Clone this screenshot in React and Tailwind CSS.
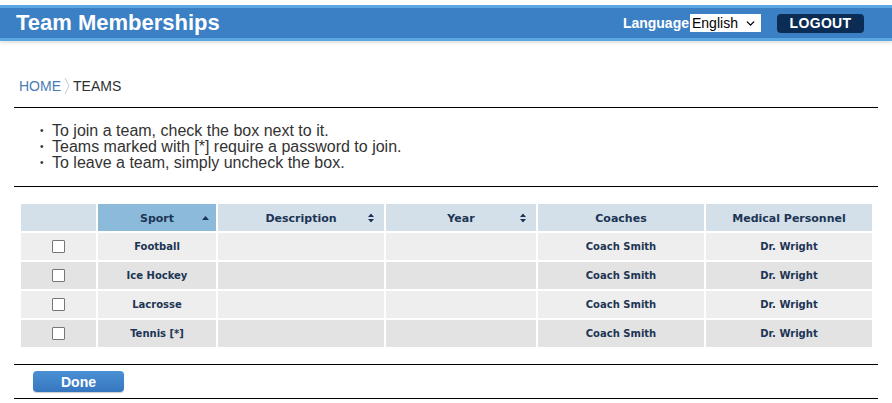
import { ChevronDown } from 'lucide-react';

const ROWS = [
  { sport: 'Football', coach: 'Coach Smith', medical: 'Dr. Wright' },
  { sport: 'Ice Hockey', coach: 'Coach Smith', medical: 'Dr. Wright' },
  { sport: 'Lacrosse', coach: 'Coach Smith', medical: 'Dr. Wright' },
  { sport: 'Tennis [*]', coach: 'Coach Smith', medical: 'Dr. Wright' },
];

const SortBoth = () => (
  <svg width="6" height="9" viewBox="0 0 6 9" className="absolute right-[10px] top-1/2 -translate-y-1/2">
    <path d="M3 0L6 3.5H0z" fill="#1c3554" />
    <path d="M3 9L6 5.5H0z" fill="#1c3554" />
  </svg>
);

const SortUp = () => (
  <svg width="7" height="4" viewBox="0 0 7 4" className="absolute right-[7px] top-1/2 -translate-y-1/2">
    <path d="M3.5 0L7 4H0z" fill="#1c3554" />
  </svg>
);

export default function App() {
  return (
    <div className="w-[892px] h-[403px] bg-white overflow-hidden font-['Liberation_Sans',Arial,sans-serif]">
      {/* header bar */}
      <header className="mt-[5px] h-[36px] bg-[#3b7fc5] border-t-[3px] border-b-[3px] border-[#5ba7e2] shadow-[0_2px_3px_rgba(0,0,0,0.12)] flex items-center pl-[16px] pr-[28px]">
        <h1 className="text-[22px] font-bold text-white leading-none">Team Memberships</h1>
        <div className="ml-auto flex items-center">
          <span className="text-[14px] font-bold text-white">Language</span>
          <div className="ml-px w-[71px] h-[18px] bg-white flex items-center pl-[2px] pr-[4px] text-[14px] text-black">
            English
            <ChevronDown size={13} strokeWidth={2.5} className="ml-auto" />
          </div>
          <button className="ml-[16px] w-[87px] h-[19px] rounded-[4px] bg-[#0b2d55] text-white text-[14px] font-bold leading-none tracking-wide">
            LOGOUT
          </button>
        </div>
      </header>

      <div className="px-[14px] w-[892px]">
        {/* breadcrumb */}
        <nav className="mt-[34px] h-[22px] pl-[5px] flex items-center text-[14px]">
          <span className="text-[#4b7cb3]">HOME</span>
          <svg width="8" height="18" viewBox="0 0 8 18" className="mx-[2px]">
            <path d="M2 1L6 9L2 17" stroke="#c9c9c9" strokeWidth="1" fill="none" />
          </svg>
          <span className="text-[#2f2f2f]">TEAMS</span>
        </nav>

        <div className="mt-[10px] border-t border-black" />

        <ul className="pt-[15px] pb-[15px] pl-[26px] text-[16px] leading-[16px] text-[#333]">
          <li className="flex"><span className="w-[12px] text-[10px]">•</span>To join a team, check the box next to it.</li>
          <li className="flex"><span className="w-[12px] text-[10px]">•</span>Teams marked with [*] require a password to join.</li>
          <li className="flex"><span className="w-[12px] text-[10px]">•</span>To leave a team, simply uncheck the box.</li>
        </ul>

        <div className="border-t border-black" />

        {/* table */}
        <div className="mt-[17px] ml-[7px] grid grid-cols-[75px_118px_166px_150px_166px_166px] auto-rows-[27px] gap-[2px] font-['DejaVu_Sans',Verdana,sans-serif] text-[10px] font-bold text-[#1c3554]">
          <div className="bg-[#d3dfe9]" />
          <div className="relative bg-[#8cbadb] flex items-center justify-center pt-[4px] text-[11px]">Sport<SortUp /></div>
          <div className="relative bg-[#d3dfe9] flex items-center justify-center pt-[4px] text-[11px]">Description<SortBoth /></div>
          <div className="relative bg-[#d3dfe9] flex items-center justify-center pt-[4px] text-[11px]">Year<SortBoth /></div>
          <div className="bg-[#d3dfe9] flex items-center justify-center pt-[4px] text-[11px]">Coaches</div>
          <div className="bg-[#d3dfe9] flex items-center justify-center pt-[4px] text-[11px]">Medical Personnel</div>

          {ROWS.map((r, i) => {
            const bg = i % 2 === 0 ? 'bg-[#eeeeee]' : 'bg-[#e3e3e3]';
            return [
              <div key={`c${i}`} className={`${bg} flex items-center justify-center`}>
                <span className="w-[13px] h-[13px] border border-[#767676] bg-white rounded-[1px]" />
              </div>,
              <div key={`s${i}`} className={`${bg} flex items-center justify-center`}>{r.sport}</div>,
              <div key={`d${i}`} className={bg} />,
              <div key={`y${i}`} className={bg} />,
              <div key={`h${i}`} className={`${bg} flex items-center justify-center`}>{r.coach}</div>,
              <div key={`m${i}`} className={`${bg} flex items-center justify-center`}>{r.medical}</div>,
            ];
          })}
        </div>

        <div className="mt-[17px] border-t border-black" />
        <div className="h-[33px] pl-[19px] flex items-center">
          <button className="w-[91px] h-[21px] rounded-[4px] bg-gradient-to-b from-[#4a90d4] to-[#3677bf] text-white text-[14px] font-bold leading-none shadow-[0_1px_1px_rgba(0,0,0,0.2)]">
            Done
          </button>
        </div>
        <div className="border-t border-black" />
      </div>
    </div>
  );
}
